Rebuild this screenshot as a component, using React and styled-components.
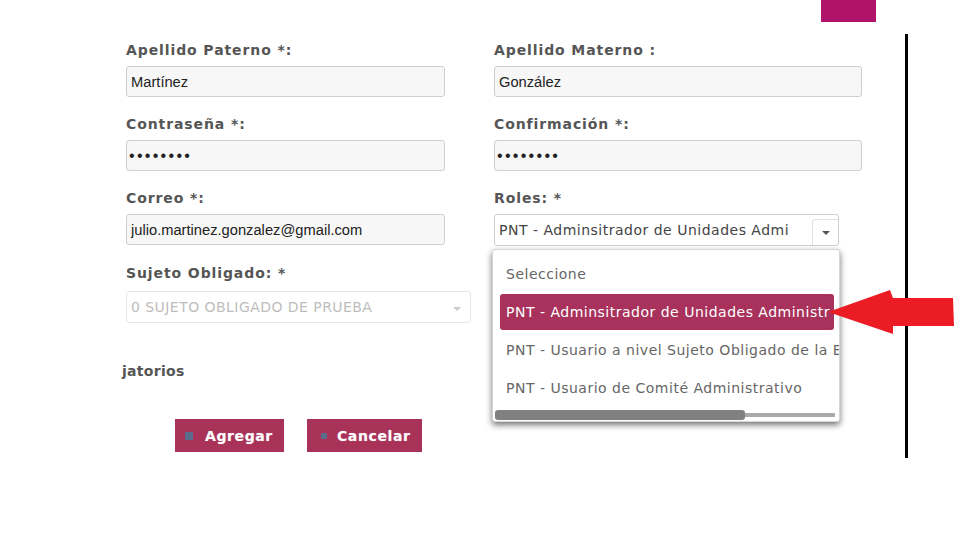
import React from "react";
import styled, { createGlobalStyle } from "styled-components";

const Global = createGlobalStyle`
  html, body { margin: 0; padding: 0; background: #fff; }
  body { width: 960px; height: 540px; overflow: hidden; font-family: "DejaVu Sans", Verdana, sans-serif; }
`;

const Page = styled.div`
  position: relative;
  display: flex;
  width: 960px;
  height: 540px;
`;

const Content = styled.div`
  width: 905px;
  display: flex;
  flex-direction: column;
`;

const TopTab = styled.div`
  margin-left: 821px;
  width: 55px;
  height: 22px;
  background: #b0136a;
`;

const Divider = styled.div`
  margin-top: 34px;
  width: 3px;
  height: 424px;
  background: #000;
`;

const Form = styled.div`
  margin-top: 18px;
  padding-left: 126px;
  display: grid;
  grid-template-columns: 319px 368px;
  column-gap: 49px;
  row-gap: 17px;
`;

const Field = styled.div`
  position: relative;
  display: flex;
  flex-direction: column;
`;

const Label = styled.label`
  height: 20px;
  line-height: 20px;
  margin-bottom: 6px;
  font-size: 14px;
  font-weight: bold;
  letter-spacing: 0.9px;
  color: #555;
  white-space: nowrap;
`;

const Input = styled.div`
  box-sizing: border-box;
  height: 31px;
  padding-left: ${(p) => (p.$password ? 2 : 4)}px;
  display: flex;
  align-items: center;
  background: #f7f7f7;
  border: 1px solid #cfcfcf;
  border-radius: 3px;
  font-family: "Liberation Sans", Arial, sans-serif;
  font-size: ${(p) => (p.$password ? 16 : 14.7)}px;
  letter-spacing: ${(p) => (p.$password ? "2.3px" : "0")};
  color: #222;
`;

const Select = styled.div`
  box-sizing: border-box;
  width: 345px;
  height: 32px;
  margin-top: ${(p) => p.$offset || 0}px;
  padding-left: 4px;
  display: flex;
  align-items: center;
  justify-content: space-between;
  background: #fff;
  border: 1px solid ${(p) => (p.$disabled ? "#e6e6e6" : "#cfcfcf")};
  border-radius: 3px;
  font-size: 14px;
  letter-spacing: ${(p) => (p.$disabled ? "0.45px" : "0.5px")};
  color: ${(p) => (p.$disabled ? "#bdbdbd" : "#444")};
  white-space: nowrap;
  overflow: hidden;
`;

const ArrowBox = styled.div`
  align-self: flex-end;
  box-sizing: border-box;
  width: 26px;
  height: 26px;
  display: flex;
  align-items: center;
  justify-content: center;
  border-left: ${(p) => (p.$plain ? "none" : "1px solid #e2e2e2")};
  border-top: ${(p) => (p.$plain ? "none" : "1px solid #e2e2e2")};
  border-top-left-radius: 3px;
  &::after {
    content: "";
    border-left: 4px solid transparent;
    border-right: 4px solid transparent;
    border-top: 4px solid ${(p) => (p.$plain ? "#ccc" : "#555")};
  }
`;

const Dropdown = styled.div`
  position: absolute;
  top: 61px;
  left: -2px;
  width: 348px;
  height: 173px;
  box-sizing: border-box;
  background: #fff;
  border: 1px solid #d6d6d6;
  border-radius: 3px;
  box-shadow: 0 3px 6px rgba(0, 0, 0, 0.55);
  padding: 4px 0 0 0;
  overflow: hidden;
  z-index: 2;
`;

const Option = styled.div`
  box-sizing: border-box;
  height: 36px;
  margin: 2px 6px 0 7px;
  padding-left: 6px;
  display: flex;
  align-items: center;
  font-size: 14px;
  letter-spacing: 0.5px;
  color: ${(p) => (p.$active ? "#fff" : "#666")};
  background: ${(p) => (p.$active ? "#a8325c" : "transparent")};
  border-radius: 3px;
  white-space: nowrap;
  overflow: hidden;
  width: ${(p) => (p.$active ? 334 : 346)}px;
`;

const Scrollbar = styled.div`
  position: absolute;
  left: 2px;
  right: 4px;
  bottom: 1px;
  height: 10px;
  display: flex;
  align-items: center;
`;

const Thumb = styled.div`
  width: 250px;
  height: 10px;
  background: #808080;
  border-radius: 3px;
`;

const Track = styled.div`
  flex: 1;
  height: 4px;
  background: #aaa;
`;

const Note = styled.div`
  margin-top: 38px;
  padding-left: 122px;
  height: 20px;
  line-height: 20px;
  font-size: 14px;
  font-weight: bold;
  letter-spacing: 0.3px;
  color: #555;
`;

const Buttons = styled.div`
  margin-top: 38px;
  padding-left: 175px;
  display: flex;
  gap: 23px;
`;

const Button = styled.button`
  box-sizing: border-box;
  width: ${(p) => p.$w}px;
  height: 33px;
  display: flex;
  align-items: center;
  gap: ${(p) => p.$gap}px;
  padding: 0 0 0 ${(p) => p.$pad}px;
  border: none;
  background: #a93259;
  color: #fff;
  font-family: "DejaVu Sans", Verdana, sans-serif;
  font-size: 14px;
  font-weight: bold;
  letter-spacing: 0.6px;
  text-shadow: 0 0 1px rgba(255, 255, 255, 0.4);
`;

const BtnIcon = styled.span`
  width: ${(p) => p.$size}px;
  height: ${(p) => p.$size}px;
  background: #5b6d8c;
  border-radius: 1px;
`;

const RedArrow = styled.svg`
  position: absolute;
  left: 826px;
  top: 288px;
  z-index: 3;
`;

export default function App() {
  return (
    <Page>
      <Global />
      <Content>
        <TopTab />
        <Form>
          <Field>
            <Label>Apellido Paterno *:</Label>
            <Input>Martínez</Input>
          </Field>
          <Field>
            <Label>Apellido Materno :</Label>
            <Input>González</Input>
          </Field>
          <Field>
            <Label>Contraseña *:</Label>
            <Input $password>••••••••</Input>
          </Field>
          <Field>
            <Label>Confirmación *:</Label>
            <Input $password>••••••••</Input>
          </Field>
          <Field>
            <Label>Correo *:</Label>
            <Input>julio.martinez.gonzalez@gmail.com</Input>
          </Field>
          <Field>
            <Label>Roles: *</Label>
            <Select>
              <span>PNT - Adminsitrador de Unidades Admi</span>
              <ArrowBox />
            </Select>
            <Dropdown>
              <Option>Seleccione</Option>
              <Option $active>PNT - Adminsitrador de Unidades Administr</Option>
              <Option>PNT - Usuario a nivel Sujeto Obligado de la E</Option>
              <Option>PNT - Usuario de Comité Administrativo</Option>
              <Scrollbar>
                <Thumb />
                <Track />
              </Scrollbar>
            </Dropdown>
          </Field>
          <Field>
            <Label>Sujeto Obligado: *</Label>
            <Select $disabled $offset={2}>
              <span>0 SUJETO OBLIGADO DE PRUEBA</span>
              <ArrowBox $plain />
            </Select>
          </Field>
        </Form>
        <Note>jatorios</Note>
        <Buttons>
          <Button $w={109} $pad={10} $gap={12}>
            <BtnIcon $size={8} />
            Agregar
          </Button>
          <Button $w={115} $pad={14} $gap={10}>
            <BtnIcon $size={6} />
            Cancelar
          </Button>
        </Buttons>
      </Content>
      <Divider />
      <RedArrow width="130" height="50" viewBox="0 0 130 50">
        <polygon points="2,24 64,2 67,10 127,10 128,38 67,38 67,46" fill="#ec1c24" />
      </RedArrow>
    </Page>
  );
}
